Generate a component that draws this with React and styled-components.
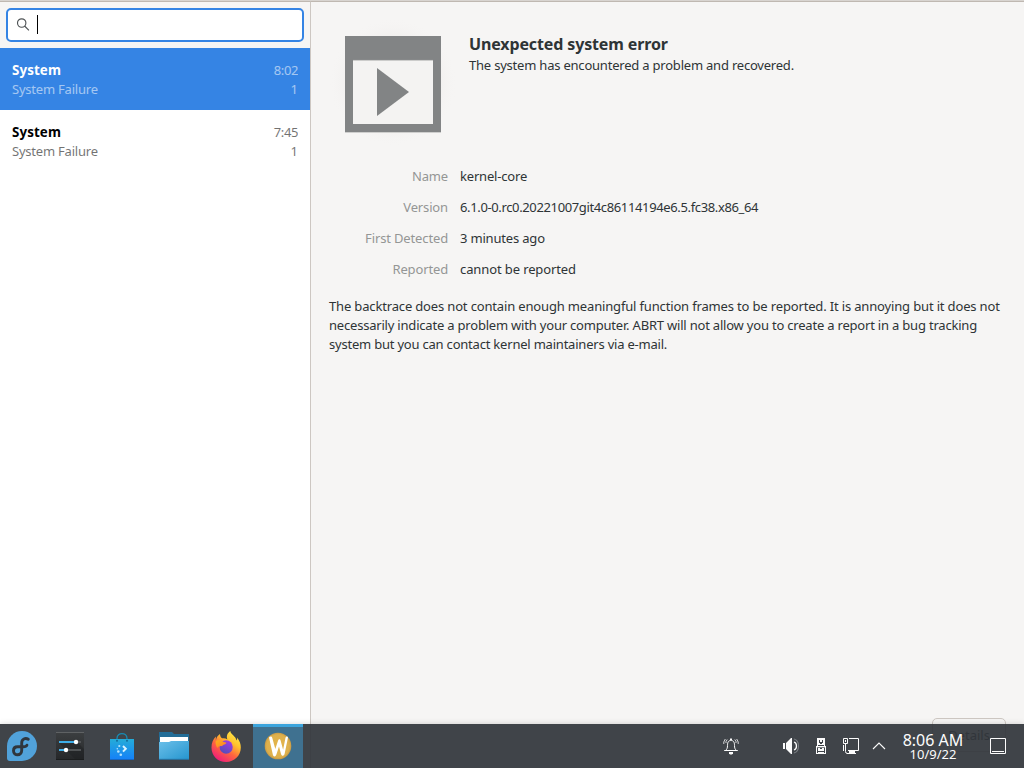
import React from "react";
import styled, { createGlobalStyle } from "styled-components";

const GlobalStyle = createGlobalStyle`
  * { box-sizing: border-box; }
  html, body, #root { height: 100%; margin: 0; }
  body { overflow: hidden; font-family: "Noto Sans", sans-serif; font-size: 13px; line-height: 19px; color: #2e3436; }
  svg { display: block; flex: none; }
`;

const Desktop = styled.div`
  position: relative;
  width: 1024px;
  height: 768px;
  overflow: hidden;
`;

const Window = styled.main`
  display: flex;
  height: 768px;
  background: #f6f5f4;
  border-top: 1px solid #d8d4d0;
`;

const Sidebar = styled.aside`
  flex: none;
  width: 311px;
  border-top: 1px solid #bfb8b1;
  border-right: 1px solid #cdc7c2;
  background: #fff;
`;

const SearchBar = styled.div`
  height: 46px;
  padding: 6px;
  background: #f6f5f4;
`;

const SearchField = styled.div`
  display: flex;
  align-items: center;
  gap: 8px;
  height: 34px;
  padding-left: 8px;
  background: #fff;
  border: 2px solid #3584e4;
  border-radius: 5px;
`;

const Caret = styled.span`
  width: 1px;
  height: 19px;
  margin: -1px 0 0 -3px;
  background: #000;
`;

const Problem = styled.div`
  height: 62px;
  padding: 13px 12px 11px;
  color: ${(p) => (p.$selected ? "#fff" : "#000")};
  background: ${(p) => (p.$selected ? "#3584e4" : "#fff")};
`;

const ProblemLine = styled.div`
  display: flex;
  justify-content: space-between;
`;

const ProblemTitle = styled.strong`
  font-size: 13.33px;
  letter-spacing: 0.1px;
`;

const Dim = styled.span`
  opacity: 0.55;
  letter-spacing: ${(p) => p.$tracking || 0}px;
`;

const Details = styled.section`
  display: flex;
  flex-direction: column;
  flex: 1;
  min-width: 0;
  padding: 16px 18px 16px;
  border-top: 1px solid #bfb8b1;
`;

const Summary = styled.header`
  display: flex;
  gap: 12px;
  height: 128px;
`;

const SummaryText = styled.div`
  padding-top: 15px;
`;

const Heading = styled.h1`
  margin: 0;
  font-size: 16px;
  line-height: 23px;
  font-weight: 700;
  letter-spacing: -0.13px;
`;

const Subtitle = styled.div`
  letter-spacing: -0.21px;
`;

const Facts = styled.dl`
  display: grid;
  grid-template-columns: 119px 1fr;
  column-gap: 12px;
  row-gap: 12px;
  margin: 21px 0 18px;
`;

const FactName = styled.dt`
  text-align: right;
  color: #949695;
  letter-spacing: -0.14px;
`;

const FactValue = styled.dd`
  margin: 0;
  letter-spacing: ${(p) => p.$tracking}px;
`;

const Explanation = styled.p`
  margin: 0;
`;

const ExplanationLine = styled.span`
  display: block;
  white-space: nowrap;
  letter-spacing: ${(p) => p.$tracking}px;
`;

const DetailsButton = styled.button`
  width: 74px;
  height: 34px;
  margin: auto 0 0 auto;
  padding: 0;
  font: inherit;
  color: #2e3436;
  background: #f6f5f4;
  border: 1px solid #cdc7c2;
  border-radius: 5px;
`;

const Taskbar = styled.footer`
  position: absolute;
  left: 0;
  right: 0;
  bottom: 0;
  display: flex;
  align-items: center;
  height: 44px;
  color: #fcfcfc;
  background: rgba(49, 54, 59, 0.93);
  box-shadow: 0 0 6px rgba(0, 0, 0, 0.16);
`;

const Launchers = styled.nav`
  display: flex;
  align-items: center;
  height: 44px;
`;

const Launcher = styled.div`
  display: flex;
  align-items: center;
  justify-content: center;
  width: ${(p) => p.$width || 52}px;
  height: 44px;
  margin-left: ${(p) => (p.$active ? 1 : 0)}px;
  border-top: 3px solid ${(p) => (p.$active ? "#3ca4dc" : "transparent")};
  padding-bottom: 3px;
  background: ${(p) => (p.$active ? "#3f7190" : "transparent")};
`;

const Tray = styled.div`
  display: flex;
  align-items: center;
  margin-left: auto;
`;

const TrayIcon = styled.div`
  margin-right: ${(p) => p.$after}px;
`;

const Clock = styled.div`
  display: flex;
  flex-direction: column;
  align-items: center;
  width: 66px;
  margin-right: 24px;
  padding-bottom: 3px;
`;

const Time = styled.span`
  font-size: 16px;
  line-height: 20px;
  white-space: nowrap;
`;

const DateText = styled.span`
  font-size: 13px;
  line-height: 9px;
`;

const SearchIcon = () => (
  <svg width="16" height="16" viewBox="0 0 16 16" fill="none" stroke="#4e5355" strokeWidth="1.15">
    <circle cx="5.7" cy="6" r="4.2" />
    <path d="M8.6 9l4.3 4.3" />
  </svg>
);

const AppIcon = () => (
  <svg width="128" height="128" viewBox="0 0 128 128">
    <defs>
      <radialGradient id="halo">
        <stop offset="0.7" stopColor="#e8e5e3" stopOpacity="0.35" />
        <stop offset="1" stopColor="#f6f5f4" stopOpacity="0" />
      </radialGradient>
    </defs>
    <rect width="128" height="128" fill="url(#halo)" />
    <path d="M16 114.3h96" stroke="#c6c6c5" />
    <path d="M16 18h96v96H16z" fill="#828485" />
    <path d="M24 42h80v64H24z" fill="#f4f3f2" />
    <path d="M24 42.4h80" stroke="#bbb" strokeWidth="0.8" />
    <path d="M48 50v48l32-24z" fill="#828485" />
  </svg>
);

const FedoraIcon = () => (
  <svg width="30" height="30" viewBox="0 0 30 30">
    <path d="M15 0a15 15 0 1 1 0 30H3a3 3 0 0 1-3-3V15A15 15 0 0 1 15 0z" fill="#51a2da" />
    <path d="M21.3 8.3c-3-2-6.6-.2-6.6 3.6v7.4c0 6-8.2 5.9-8.2.4 0-2.7 2-4 4.2-4h5.6c2 0 3.2-.5 3.6-1.5" fill="none" stroke="#30363d" strokeWidth="2.9" strokeLinecap="round" />
  </svg>
);

const SettingsIcon = () => (
  <svg width="28" height="28" viewBox="0 0 28 28">
    <defs>
      <linearGradient id="tile" x1="0" y1="0" x2="0" y2="1"><stop stopColor="#3c3f41" /><stop offset="1" stopColor="#252729" /></linearGradient>
    </defs>
    <path d="M0 0h28v28H0z" fill="url(#tile)" />
    <path d="M0 .5h28" stroke="#5f6264" />
    <path d="M3 11l16 16h9V17l-7-7-9 2z" fill="#1b1e20" opacity=".4" />
    <path d="M0 27.5h28" stroke="#1b1d1e" />
    <path d="M3 10h22M3 18h22" stroke="#505355" strokeWidth="2" />
    <path d="M3 10h17M3 18h7" stroke="#3daee9" strokeWidth="2" />
    <circle cx="20" cy="10" r="2.2" fill="#fff" /><circle cx="10" cy="18" r="2.2" fill="#fff" />
  </svg>
);

const StoreIcon = () => (
  <svg width="24" height="28" viewBox="0 0 24 28">
    <defs><linearGradient id="bag" x1="0" y1="0" x2="0" y2="1"><stop stopColor="#25acd8" /><stop offset="1" stopColor="#1480f9" /></linearGradient></defs>
    <path d="M7 9V6.5c0-6.5 10-6.5 10 0V9" fill="none" stroke="#178cb3" strokeWidth="1.3" />
    <path d="M0 7h24v21H0z" fill="url(#bag)" />
    <path d="M0 27.5h24" stroke="#1567c4" />
    <circle cx="7" cy="8.8" r="1" fill="#126c9d" /><circle cx="17" cy="8.8" r="1" fill="#126c9d" />
    <path d="M13 14l2.8 2.8-2.8 2.8" fill="none" stroke="#d9f3ff" strokeWidth="2" />
    <g fill="#b4e2fc"><circle cx="9.3" cy="14" r="1.1" /><circle cx="7.3" cy="16.8" r=".8" /><circle cx="8.3" cy="19.5" r="1.3" /><circle cx="10.8" cy="22.8" r="1.3" /></g>
  </svg>
);

const FilesIcon = () => (
  <svg width="30" height="28" viewBox="0 0 30 28">
    <defs><linearGradient id="folder" x1="0" y1="0" x2="1" y2="1"><stop stopColor="#6bbfe9" /><stop offset="1" stopColor="#2696cf" /></linearGradient></defs>
    <path d="M0 0h13l2 2h15v11H0z" fill="#236d97" />
    <path d="M1 5h28v9H1z" fill="#fff" />
    <path d="M0 10h10l2-1h18v18H0z" fill="url(#folder)" />
    <path d="M0 27.3h30" stroke="#257bb0" />
  </svg>
);

const FirefoxIcon = () => (
  <svg width="30" height="31" viewBox="0 0 31 31" preserveAspectRatio="none">
    <defs>
      <linearGradient id="flame" x1=".9" y1="0" x2=".25" y2="1"><stop stopColor="#fff44f" /><stop offset=".35" stopColor="#ffc22d" /><stop offset=".62" stopColor="#ff663e" /><stop offset="1" stopColor="#ed187e" /></linearGradient>
      <linearGradient id="globe" x1=".8" y1="0" x2=".2" y2="1"><stop stopColor="#a33bea" /><stop offset=".6" stopColor="#7147c7" /><stop offset="1" stopColor="#4f50b5" /></linearGradient>
      <linearGradient id="fox" x1="0" y1="0" x2="1" y2="1"><stop stopColor="#ffb01d" /><stop offset="1" stopColor="#ff7b27" /></linearGradient>
    </defs>
    <path d="M20 0c0 3.4 5.8 5.1 6.3 9.4.8-.8.8-2 .5-3 3 3.2 4 6.7 4 10.2C30.8 25 24 31 15.7 31 7 31 .5 24.8.5 16.4c0-4.7 1.7-8.2 4.5-11v4c.7-2.8 2-5 4.3-6.3.1 2 .7 3.2 2.1 4.2 2.2-.4 4 0 5.5 1.1C15.6 4.8 17.1 2 20 0z" fill="url(#flame)" />
    <circle cx="15.7" cy="16" r="6.8" fill="url(#globe)" />
    <path d="M5 10c2-1.6 5.8-1.5 7.3.7 1.5.7 3.1.3 3.7 1.1-.3 1.6-3.9 1.9-4.6 3.4-1.8-.7-4.2.3-4.8 1.7C5.1 14.7 4.2 12 5 10z" fill="url(#fox)" />
  </svg>
);

const WaylandIcon = () => (
  <svg width="28" height="28" viewBox="0 0 28 28">
    <defs><radialGradient id="coin"><stop stopColor="#e5b54a" /><stop offset=".85" stopColor="#ddb04d" /><stop offset="1" stopColor="#c69944" /></radialGradient></defs>
    <circle cx="14" cy="14" r="13.3" fill="url(#coin)" />
    <path d="M5 5.5c1-1.4 2.8-1.2 3.3.4l3 11 2.8-8.5c.6-1.6 2.2-1.4 2.5.2l2.5 9.2 2.4-12c.4-1.8 2.3-1.8 2.5-.3l-3.3 16c-.6 2.8-3 3-3.7.5l-2-7.5-2.6 8c-.9 2.6-3 2.5-3.6 0z" fill="#fff" />
  </svg>
);

const BellIcon = () => (
  <svg width="16" height="17" viewBox="0 0 16 17" fill="none" stroke="#fcfcfc">
    <path d="M1.2 12.5h13.6M3 12c1-1 1.5-2 1.5-4.5C4.5 3.8 5.7 2.5 8 2.5s3.5 1.3 3.5 5c0 2.5.5 3.5 1.5 4.5M7.5 2V.8h1V2" />
    <path d="M.8 6V4l1.5-3M15.2 6V4l-1.5-3M3 5V3.5L4.2 1.5M13 5V3.5L11.8 1.5" strokeWidth=".8" />
    <path d="M6 14h4v1.2L9 16.5H7l-1-1.3z" fill="#fcfcfc" stroke="none" />
  </svg>
);

const VolumeIcon = () => (
  <svg width="18" height="16" viewBox="0 0 18 16">
    <path d="M0 5h2v6H0zM3 5l5-5h1v16H8l-5-5z" fill="#fcfcfc" />
    <path d="M11 4c3.3 1 3.3 7 0 8" fill="none" stroke="#fcfcfc" strokeWidth="1.3" />
    <path d="M11 1c6 1.5 6 12.5 0 14" fill="none" stroke="#777c80" strokeWidth="1.1" />
  </svg>
);

const UsbIcon = () => (
  <svg width="10" height="16" viewBox="0 0 10 16">
    <path d="M1 0h8v8h1v8H0V8h1z" fill="#fcfcfc" />
    <path d="M3 2h1v3H3zM6 2h1v3H6zM4 4h2v2H4zM2 7h6v1H2zM1 9h8v1H1zM1 10h1v5H1zM8 10h1v5H8zM4 10h2v1H4zM2 13h6v1H2z" fill="#3f4449" />
    <path d="M1 9h8v.5H1z" fill="#fcfcfc" opacity=".7" />
  </svg>
);

const NetworkIcon = () => (
  <svg width="16" height="16" viewBox="0 0 16 16">
    <path d="M6 .5h9.5v12H5" fill="none" stroke="#fcfcfc" />
    <path d="M.5.5h4v5h-4zM2.5 2v2M2.5 6v7.5q0 2 2 2h2" fill="none" stroke="#fcfcfc" />
    <path d="M.5 7v6" stroke="#fcfcfc" />
    <path d="M6 13h6v2h1v1H4v-1h2z" fill="#fcfcfc" />
  </svg>
);

const ArrowIcon = () => (
  <svg width="14" height="8" viewBox="0 0 14 8"><path d="M1 7l6-6 6 6" fill="none" stroke="#fcfcfc" strokeWidth="1.1" /></svg>
);

const ShowDesktopIcon = () => (
  <svg width="16" height="16" viewBox="0 0 16 16" fill="none" stroke="#fcfcfc"><path d="M.5.5h15v15H.5zM2 13.5h12" /></svg>
);

const problems = [
  { time: "8:02", selected: true },
  { time: "7:45", selected: false },
];

const facts = [
  { name: "Name", value: "kernel-core", tracking: -0.18 },
  { name: "Version", value: "6.1.0-0.rc0.20221007git4c86114194e6.5.fc38.x86_64", tracking: -0.365 },
  { name: "First Detected", value: "3 minutes ago", tracking: -0.18 },
  { name: "Reported", value: "cannot be reported", tracking: -0.11 },
];

const explanation = [
  { text: "The backtrace does not contain enough meaningful function frames to be reported. It is annoying but it does not", tracking: -0.158 },
  { text: "necessarily indicate a problem with your computer. ABRT will not allow you to create a report in a bug tracking", tracking: -0.2 },
  { text: "system but you can contact kernel maintainers via e-mail.", tracking: -0.21 },
];

export default function App() {
  return (
    <Desktop>
      <GlobalStyle />
      <Window>
        <Sidebar>
          <SearchBar><SearchField><SearchIcon /><Caret /></SearchField></SearchBar>
          {problems.map(({ time, selected }) => (
            <Problem key={time} $selected={selected}>
              <ProblemLine><ProblemTitle>System</ProblemTitle><Dim $tracking={-0.4}>{time}</Dim></ProblemLine>
              <ProblemLine><Dim $tracking={-0.21}>System Failure</Dim><Dim>1</Dim></ProblemLine>
            </Problem>
          ))}
        </Sidebar>
        <Details>
          <Summary>
            <AppIcon />
            <SummaryText>
              <Heading>Unexpected system error</Heading>
              <Subtitle>The system has encountered a problem and recovered.</Subtitle>
            </SummaryText>
          </Summary>
          <Facts>
            {facts.map(({ name, value, tracking }) => (
              <React.Fragment key={name}>
                <FactName>{name}</FactName>
                <FactValue $tracking={tracking}>{value}</FactValue>
              </React.Fragment>
            ))}
          </Facts>
          <Explanation>
            {explanation.map(({ text, tracking }) => (
              <ExplanationLine key={text} $tracking={tracking}>{text}</ExplanationLine>
            ))}
          </Explanation>
          <DetailsButton>Details</DetailsButton>
        </Details>
      </Window>
      <Taskbar>
        <Launchers>
          <Launcher $width={44}><FedoraIcon /></Launcher>
          <Launcher><SettingsIcon /></Launcher>
          <Launcher><StoreIcon /></Launcher>
          <Launcher><FilesIcon /></Launcher>
          <Launcher><FirefoxIcon /></Launcher>
          <Launcher $active $width={50}><WaylandIcon /></Launcher>
        </Launchers>
        <Tray>
          <TrayIcon $after={44}><BellIcon /></TrayIcon>
          <TrayIcon $after={15}><VolumeIcon /></TrayIcon>
          <TrayIcon $after={17}><UsbIcon /></TrayIcon>
          <TrayIcon $after={13}><NetworkIcon /></TrayIcon>
          <TrayIcon $after={14}><ArrowIcon /></TrayIcon>
          <Clock><Time>8:06 AM</Time><DateText>10/9/22</DateText></Clock>
          <TrayIcon $after={18}><ShowDesktopIcon /></TrayIcon>
        </Tray>
      </Taskbar>
    </Desktop>
  );
}
